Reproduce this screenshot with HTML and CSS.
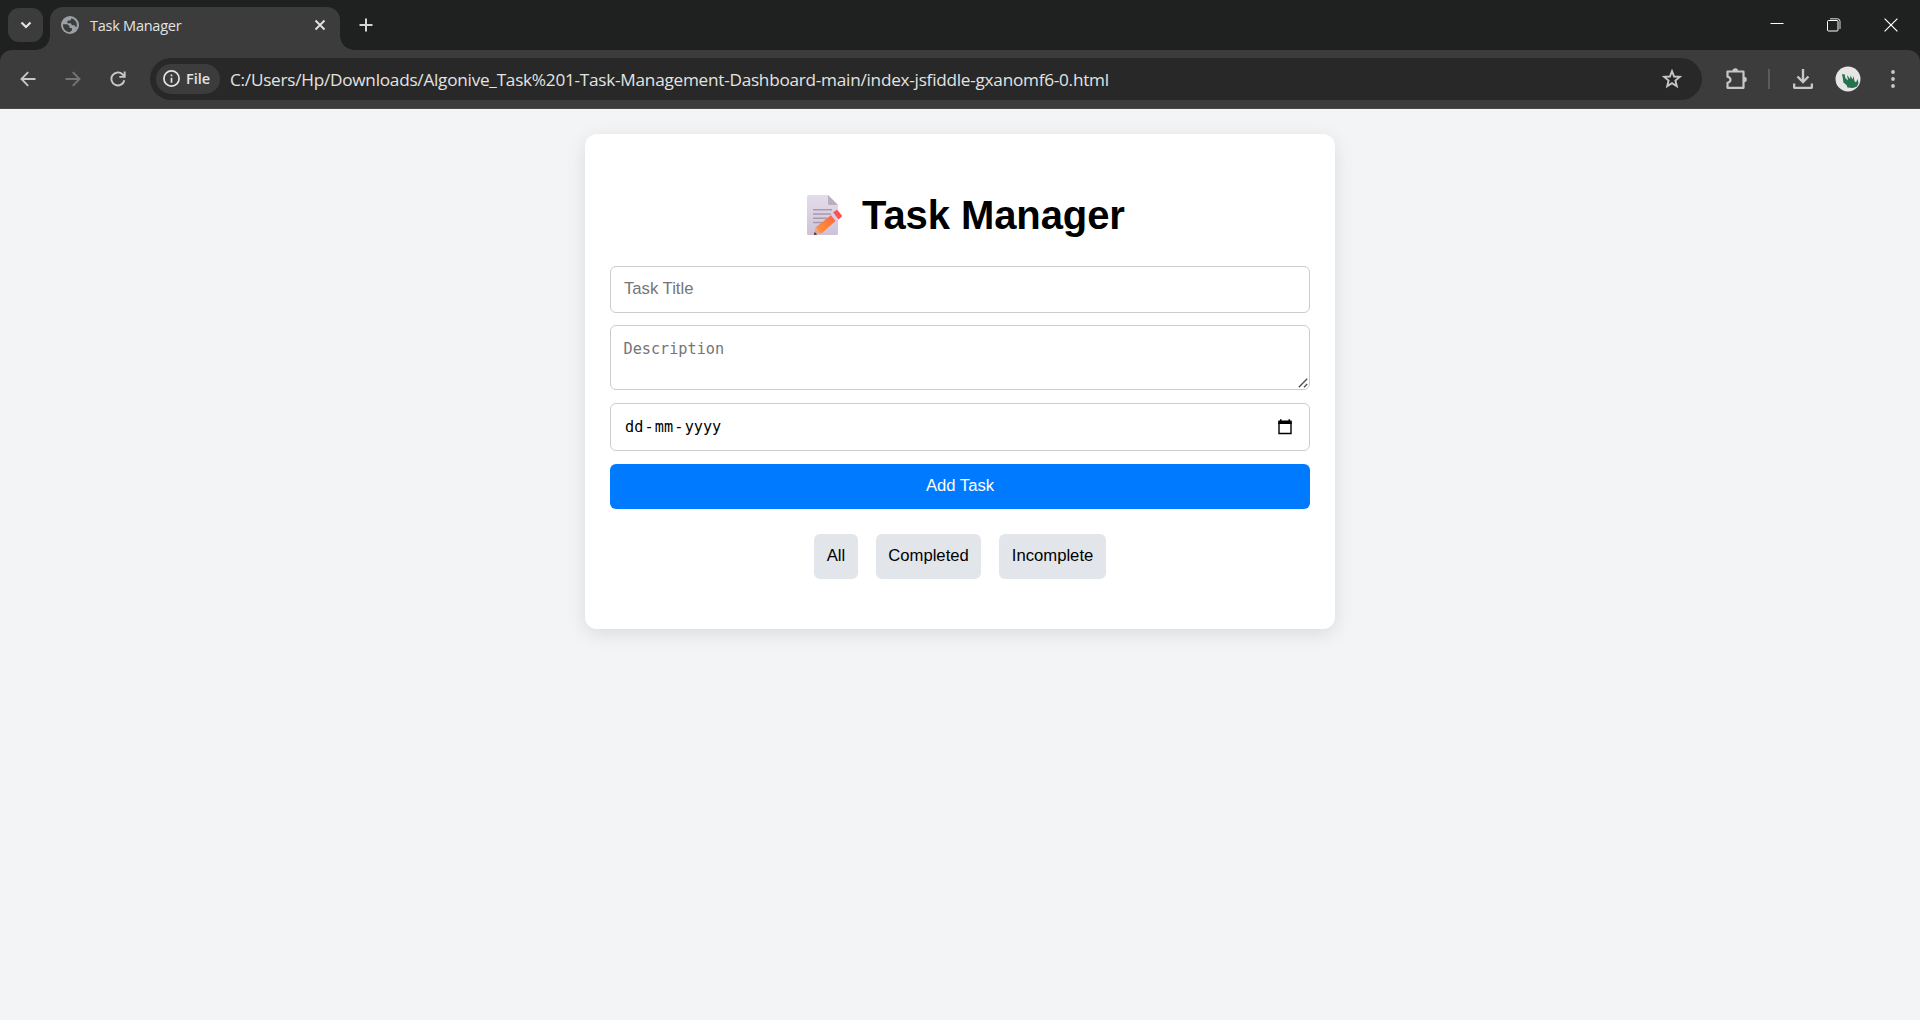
FILE: index.html
```html
<!DOCTYPE html>
<html lang="en">
<head>
<meta charset="utf-8">
<title>Task Manager</title>
<link rel="stylesheet" href="styles.css">
</head>
<body>
<header class="browser">
  <div class="tabstrip">
    <div class="tab-search">
      <svg width="12" height="8" viewBox="0 0 12 8"><path d="M1.500 1.500 6 6l4.500-4.500" fill="none" stroke="#e3e3e3" stroke-width="2.200"/></svg>
    </div>
    <div class="tab">
      <svg class="favicon" width="18" height="18" viewBox="0 0 18 18"><circle cx="9" cy="9" r="9" fill="#9aa0a6"/><path d="M10.500 2.200 9.500 4.500H7.200L6 6l.8 1.200h3L11 9.300h2.500l1 1.500 1.200.2A7.200 7.200 0 0 0 10.500 2.200zM2 8.200h4.200L8.500 10v1.800l2.500.5v2l-2.300 1.900A7.100 7.100 0 0 1 2 8.200z" fill="#3c3c3c"/></svg>
      <span class="tab-title">Task Manager</span>
      <svg class="tab-close" width="12" height="12" viewBox="0 0 12 12"><path d="m1.500 1.500 9 9m0-9-9 9" stroke="#e3e3e3" stroke-width="1.900"/></svg>
    </div>
    <svg class="new-tab" width="14" height="14" viewBox="0 0 14 14"><path d="M7 .5v13M.5 7h13" stroke="#d5d5d5" stroke-width="2"/></svg>
    <div class="window-controls">
      <svg width="14" height="14" viewBox="0 0 14 14"><path d="M.5 5.500h13" stroke="#fff"/></svg>
      <svg width="14" height="14" viewBox="0 0 14 14"><path d="M3 .8h7.500a2.500 2.500 0 0 1 2.500 2.500V11" fill="none" stroke="#ddd"/><rect x=".5" y="2.500" width="10.500" height="10.500" rx="1" fill="none" stroke="#fff"/></svg>
      <svg width="14" height="14" viewBox="0 0 14 14"><path d="m.6.6 12.800 12.800m0-12.800L.6 13.400" stroke="#fff" stroke-width="1.200"/></svg>
    </div>
  </div>
  <div class="toolbar">
    <div class="nav">
      <svg width="16" height="16" viewBox="0 0 16 16"><path d="M15.500 8H2M8.200 1.200 1.500 8l6.700 6.800" fill="none" stroke="#c7c7c7" stroke-width="1.900"/></svg>
      <svg width="16" height="16" viewBox="0 0 16 16"><path d="M.5 8H14M7.800 1.200 14.500 8l-6.700 6.800" fill="none" stroke="#757575" stroke-width="1.900"/></svg>
      <svg width="16" height="16" viewBox="0 0 16 16"><path d="M14.300 9.200A6.500 6.500 0 1 1 12.700 3.500L14.500 5.400" fill="none" stroke="#c7c7c7" stroke-width="1.900"/><path d="M14.700.5v5.400H9.300" fill="none" stroke="#c7c7c7" stroke-width="1.900"/></svg>
    </div>
    <div class="omnibox">
      <div class="chip">
        <svg width="17" height="17" viewBox="0 0 17 17"><circle cx="8.500" cy="8.500" r="7.600" fill="none" stroke="#e3e3e3" stroke-width="1.700"/><path d="M8.500 7.700v5M8.500 4.400v1.800" stroke="#e3e3e3" stroke-width="1.700"/></svg>
        <span>File</span>
      </div>
      <span class="url">C:/Users/Hp/Downloads/Algonive_Task%201-Task-Management-Dashboard-main/index-jsfiddle-gxanomf6-0.html</span>
      <svg class="star" width="20" height="20" viewBox="0 0 20 20"><path d="m10 2.200 2.100 5.300 5.700.4-4.400 3.700 1.400 5.600L10 14.200l-4.800 3 1.400-5.600-4.400-3.700 5.700-.4z" fill="none" stroke="#c7c7c7" stroke-width="1.900"/></svg>
    </div>
    <div class="actions">
      <svg width="22" height="22" viewBox="0 0 22 22"><path d="M2.500 3.500h16v16.300h-16v-5c4-1 4-5 0-6z" fill="none" stroke="#c7c7c7" stroke-width="2.200" stroke-linejoin="round"/><path d="M7.500 3a2.800 2.800 0 0 1 5.600 0zM19 8.700a2.800 2.800 0 0 1 0 5.600z" fill="#c7c7c7"/></svg>
      <span class="divider"></span>
      <svg class="download" width="20" height="20" viewBox="0 0 20 20"><path d="M10 0v12M4.500 7.500 10 13l5.500-5.500M1.100 14.500V18q0 .9.900.9h16q.9 0 .9-.9v-3.500" fill="none" stroke="#c7c7c7" stroke-width="2.400"/></svg>
      <svg class="avatar" width="26" height="26" viewBox="0 0 26 26"><circle cx="13" cy="13" r="12.500" fill="#e6e6e6"/><path d="m7.500 12.500 2 3 3 2v2l-4-3z" fill="#a9b8b0"/><path d="M7 8.200h2.500l1 4 2.500 2.300-1-5.500 3 4 .5-3.500 2 4 1-3.500 1 5 1.500 1.500 1.500-3.500 1 4-1.500 3.500-4 1.500-5.500-.5-1-2.500-3-2.500-.7-4.500z" fill="#25724f"/></svg>
      <svg class="menu" width="4" height="18" viewBox="0 0 4 18"><g fill="#c7c7c7"><circle cx="2" cy="2" r="1.900"/><circle cx="2" cy="9" r="1.900"/><circle cx="2" cy="16" r="1.900"/></g></svg>
    </div>
  </div>
</header>
<main class="container">
  <h1 class="title">
    <svg class="memo" width="36" height="40" viewBox="0 0 36 40">
      <defs>
        <linearGradient id="paper" x1="0" y1="0" x2="0" y2="1"><stop offset="0" stop-color="#e4dcea"/><stop offset="1" stop-color="#cfc2d8"/></linearGradient>
        <linearGradient id="pencil" x1="0" y1="1" x2="1" y2="0"><stop offset="0" stop-color="#ff9a3d"/><stop offset="1" stop-color="#f8653c"/></linearGradient>
      </defs>
      <path d="M1.500 0H21l10 10v28.500q0 1.500-1.500 1.500h-28Q0 40 0 38.500v-37Q0 0 1.500 0z" fill="url(#paper)"/>
      <path d="M21 0v8.500Q21 10 22.500 10H31z" fill="#b9aec0"/>
      <path d="M6 14.800h19M6 19h18M6 23.300h14M6 27.500h9" stroke="#a69bad" stroke-width="1.500"/>
      <path d="m8.500 32.500-1.500 7 7.500-1.200z" fill="#e5a58c"/>
      <path d="m7.500 37-.5 3 3.200-.6z" fill="#4a2638"/>
      <path d="m8.500 32.500 16-12.700 4.300 6-14.600 13q-1-1.500-2.500-2-.5-3-3.200-4.300z" fill="url(#pencil)"/>
      <path d="m24 20.200 3-2.500 4.700 5.500-3 2.700z" fill="#d9cfe8"/>
      <path d="m26.200 17.500 2.500-2q1.200-1 2.300.2l3.600 4.300q.9 1.100-.2 2.100l-2.800 2.400z" fill="#fb5450"/>
    </svg>
    <span>Task Manager</span>
  </h1>
  <form class="form">
    <input class="field field-title" type="text" placeholder="Task Title">
    <div class="description">
      <textarea class="field field-description" placeholder="Description"></textarea>
      <svg class="grip" width="10" height="10" viewBox="0 0 10 10"><path d="M.8 9.200 9.200.8M6 9.200 9.200 6" stroke="#505050" stroke-width="1.400"/></svg>
    </div>
    <div class="field field-date">
      <span>dd</span><span>-</span><span>mm</span><span>-</span><span>yyyy</span>
      <svg class="calendar" width="14" height="16" viewBox="0 0 14 16"><path d="M1 3.500h12v11H1z" fill="none" stroke="#000" stroke-width="1.400"/><path d="M.3 1.500h13.400V5H.3zM2 .3h1.500V2H2zM10.500.3H12V2h-1.500z"/></svg>
    </div>
    <button class="add" type="button">Add Task</button>
  </form>
  <div class="filters">
    <button type="button">All</button>
    <button type="button">Completed</button>
    <button type="button">Incomplete</button>
  </div>
</main>
</body>
</html>
```
FILE: styles.css
```css
* { box-sizing: border-box; }
body {
  margin: 0;
  height: 1020px;
  overflow: hidden;
  background: #f2f4f6;
  font-family: "Liberation Sans", Arial, sans-serif;
}
svg { display: block; flex: none; }

.browser { font-family: "Open Sans", "Noto Sans", sans-serif; background: #1f2120; }
.tabstrip { display: flex; height: 50px; padding-left: 8px; }
.tab-search {
  width: 35px; height: 34px; margin-top: 8px;
  display: flex; align-items: center; justify-content: center;
  border-radius: 11px; background: #3c3c3c;
}
.tab {
  position: relative;
  display: flex; align-items: center;
  width: 290px; height: 43px; margin: 7px 0 0 7px; padding: 0 14px 7px 11px;
  border-radius: 13px 13px 0 0; background: #3c3c3c;
}
.tab::before, .tab::after {
  content: ""; position: absolute; bottom: 0; width: 14px; height: 14px;
}
.tab::before { left: -14px; background: radial-gradient(circle at 0 0, transparent 13.500px, #3c3c3c 14px); }
.tab::after { right: -14px; background: radial-gradient(circle at 100% 0, transparent 13.500px, #3c3c3c 14px); }
.tab-title { margin-left: 11px; color: #e3e3e3; font-size: 14.500px; letter-spacing: -0.250px; }
.tab-close { margin-left: auto; }
.new-tab { margin: 18px 0 0 19px; }
.window-controls { display: flex; gap: 43px; margin: 18px 22px 0 auto; }

.toolbar {
  display: flex; align-items: center;
  height: 59px; padding-bottom: 1px;
  border-bottom: 1px solid #484848; border-radius: 12px 12px 0 0;
  background: #3c3c3c;
}
.nav { display: flex; gap: 29px; margin-left: 20px; }
.omnibox {
  display: flex; align-items: center;
  width: 1552px; height: 42px; margin-left: 24px; padding: 0 20px 0 6px;
  border-radius: 21px; background: #282828;
}
.chip {
  display: flex; align-items: center; gap: 6px;
  width: 64px; height: 30px; padding-left: 7px;
  border-radius: 15px; background: #3c3c3c;
  color: #e3e3e3; font-size: 14.500px; font-weight: 600;
}
.url { margin: 1px 0 0 10px; color: #e3e3e3; font-size: 17.200px; letter-spacing: -0.252px; white-space: nowrap; }
.star { margin-left: auto; }
.actions { display: flex; align-items: center; margin-left: 23px; }
.divider { width: 2px; height: 20px; margin-left: 21px; background: #5c5c5c; }
.download { margin-left: 23px; }
.avatar { margin-left: 22px; }
.menu { margin-left: 30px; }

.container {
  width: 750px; height: 495px; margin: 25px auto 0; padding: 25px;
  border-radius: 12px; background: #fff;
  box-shadow: 0 5px 19px rgba(0, 0, 0, 0.1);
}
.title {
  display: flex; align-items: center; gap: 19px;
  height: 46px; margin: 33px 0 28px; padding-left: 197px;
  font-size: 40px; font-weight: 700; letter-spacing: -0.080px;
}
.form { display: flex; flex-direction: column; }
.field {
  display: block; width: 100%; padding: 12px;
  border: 1px solid #ccc; border-radius: 6px; background: #fff;
  font: 16.670px "Liberation Sans", Arial, sans-serif;
}
.field::placeholder { color: #757575; }
.field-title { height: 47px; padding: 12px 13px 14px; }
.description { position: relative; margin-top: 12px; }
.field-description {
  height: 65px; padding-left: 12.500px; resize: none;
  font: 15.200px/22px "DejaVu Sans Mono", monospace;
}
.grip { position: absolute; right: 2px; bottom: 2px; }
.field-date {
  display: flex; align-items: center;
  height: 48px; margin-top: 13px; padding: 0 17px 0 14px;
  font: 15.200px "DejaVu Sans Mono", monospace;
}
.field-date span { margin-right: 1.200px; }
.calendar { margin-left: auto; }
button {
  height: 45px; padding: 0 12.500px 2px; border: 0; border-radius: 6px;
  background: #e2e6ea; color: #000;
  font: 16.670px "Liberation Sans", Arial, sans-serif;
}
.add { margin-top: 13px; background: #007bff; color: #fff; }
.filters { display: flex; justify-content: center; gap: 18px; margin-top: 25px; }
```
